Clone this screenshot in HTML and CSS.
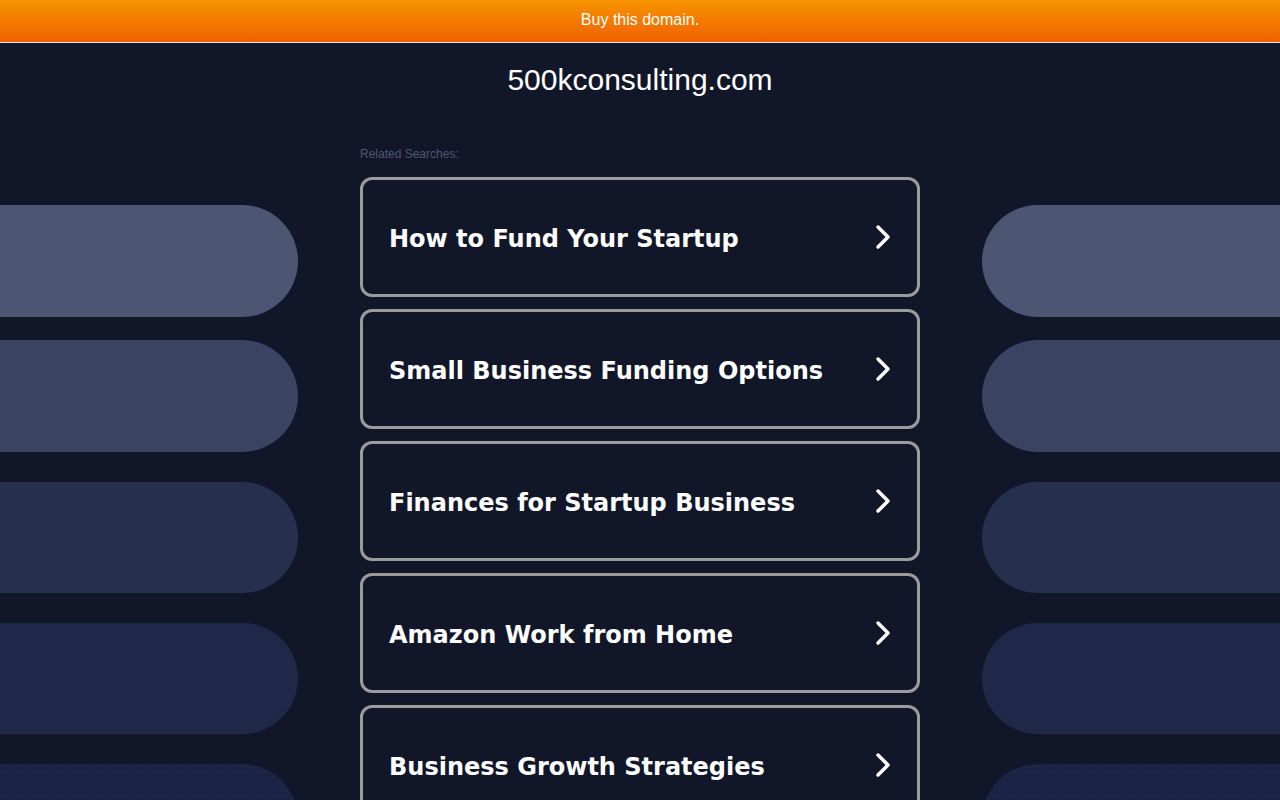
FILE: index.html
```html
<!DOCTYPE html>
<html lang="en">
<head>
    <meta charset="UTF-8">
    <meta name="viewport" content="width=device-width, initial-scale=1.0">
    <title>500kconsulting.com</title>
    <link rel="stylesheet" href="styles.css">
</head>
<body>

    <!-- Orange sale banner -->
    <div class="topbar">Buy this domain.</div>

    <div class="page">
        <!-- Decorative pills, left side -->
        <div class="side side-left">
            <div class="pill pill-1"></div>
            <div class="pill pill-2"></div>
            <div class="pill pill-3"></div>
            <div class="pill pill-4"></div>
            <div class="pill pill-5"></div>
        </div>

        <div class="content">
            <h1 class="domain">500kconsulting.com</h1>
            <div class="related">Related Searches:</div>

            <div class="links">
                <a class="link" href="#">
                    <span>How to Fund Your Startup</span>
                    <svg class="chevron" viewBox="0 0 16 26"><polyline points="3,3 13,13 3,23"/></svg>
                </a>
                <a class="link" href="#">
                    <span>Small Business Funding Options</span>
                    <svg class="chevron" viewBox="0 0 16 26"><polyline points="3,3 13,13 3,23"/></svg>
                </a>
                <a class="link" href="#">
                    <span>Finances for Startup Business</span>
                    <svg class="chevron" viewBox="0 0 16 26"><polyline points="3,3 13,13 3,23"/></svg>
                </a>
                <a class="link" href="#">
                    <span>Amazon Work from Home</span>
                    <svg class="chevron" viewBox="0 0 16 26"><polyline points="3,3 13,13 3,23"/></svg>
                </a>
                <a class="link" href="#">
                    <span>Business Growth Strategies</span>
                    <svg class="chevron" viewBox="0 0 16 26"><polyline points="3,3 13,13 3,23"/></svg>
                </a>
            </div>
        </div>

        <!-- Decorative pills, right side -->
        <div class="side side-right">
            <div class="pill pill-1"></div>
            <div class="pill pill-2"></div>
            <div class="pill pill-3"></div>
            <div class="pill pill-4"></div>
            <div class="pill pill-5"></div>
        </div>
    </div>

</body>
</html>
```

FILE: styles.css
```css
html, body {
    height: 100%;
    overflow: hidden;
}

body {
    margin: 0;
    padding: 0;
    background-color: #111729;
    font-family: Arial, "Liberation Sans", sans-serif;
    color: white;
}

/* Top banner */
.topbar {
    height: 42px;
    line-height: 40px;
    text-align: center;
    font-size: 16px;
    color: white;
    background: linear-gradient(to bottom, #f79400, #f06000);
    border-bottom: 1px solid #e8e8e8;
}

.page {
    display: grid;
    grid-template-columns: 1fr 560px 1fr;
}

/* Side decoration */
.side {
    padding-top: 162px;
    display: flex;
    flex-direction: column;
}

.side-left {
    padding-right: 62px;
}

.side-right {
    padding-left: 62px;
}

.pill {
    height: 112px;
    margin-bottom: 30px;
    flex-shrink: 0;
}

.pill-1 {
    margin-bottom: 23px;
}

.side-left .pill {
    border-radius: 0 56px 56px 0;
}

.side-right .pill {
    border-radius: 56px 0 0 56px;
}

.pill-1 { background-color: #4c5673; }
.pill-2 { background-color: #3a4361; }
.pill-3 { background-color: #262f4e; height: 111px; }

.pill-4 {
    height: 111px;
    background-color: #1e2746;
    background-image: radial-gradient(rgba(90, 105, 150, 0.12) 0.6px, transparent 0.8px);
    background-size: 4px 4px;
}

.pill-5 {
    background-color: #1b2444;
    background-image: radial-gradient(rgba(90, 105, 150, 0.15) 0.6px, transparent 0.8px);
    background-size: 5px 5px;
}

/* Middle column */
.domain {
    margin: 20px 0 0;
    font-size: 30px;
    line-height: 34px;
    font-weight: normal;
    text-align: center;
    color: white;
}

.related {
    margin-top: 50px;
    font-size: 12px;
    line-height: 14px;
    color: #4e5772;
}

.links {
    margin-top: 16px;
    display: flex;
    flex-direction: column;
    gap: 12px;
}

.link {
    box-sizing: border-box;
    height: 120px;
    display: flex;
    align-items: center;
    justify-content: space-between;
    padding: 0 26px 0 26px;
    border: 3px solid #9b9b9b;
    border-radius: 12px;
    text-decoration: none;
    color: white;
    font-family: "DejaVu Sans", Verdana, sans-serif;
    font-size: 24px;
    font-weight: bold;
}

.link span {
    padding-top: 4px;
}

.chevron {
    width: 16px;
    height: 26px;
}

.chevron polyline {
    fill: none;
    stroke: white;
    stroke-width: 3.5;
    stroke-linecap: round;
    stroke-linejoin: round;
}
```
